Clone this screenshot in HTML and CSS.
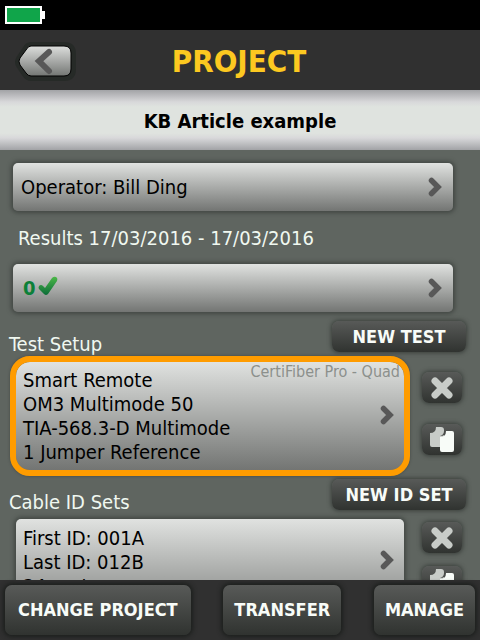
FILE: index.html
```html
<!DOCTYPE html>
<html lang="en">
<head>
    <meta charset="utf-8">
    <title>Project</title>
    <link rel="stylesheet" href="styles.css">
</head>
<body>
    <!-- shared icons -->
    <svg class="sprite" aria-hidden="true">
        <symbol id="chevron" viewBox="0 0 14 20">
            <path d="M3.5 3.5 L10 10 L3.5 16.5" fill="none" stroke="#585858" stroke-width="5.5" stroke-linecap="round"/>
        </symbol>
        <symbol id="cross" viewBox="0 0 22 22">
            <path d="M4 4 L18 18 M18 4 L4 18" stroke="#c8ccc8" stroke-width="7" stroke-linecap="round"/>
        </symbol>
        <symbol id="copy" viewBox="0 0 26 26">
            <path d="M7 0 H12 Q15 0 15 3 V20 H3 Q1 20 1 18 V6 Q7 6 7 0 Z" fill="#c8ccc8"/>
            <path d="M11 9 Q17 9 17 4 L15 4 Q15 8 11 9 Z" fill="#4a4c4a"/>
            <path d="M17 4 H23 Q25 4 25 6 V23 Q25 25 23 25 H13 Q11 25 11 23 V10 Q17 10 17 4 Z" fill="#f8fcf8"/>
        </symbol>
    </svg>

    <div class="status-bar">
        <div class="battery"><span></span></div>
    </div>

    <header class="top-bar">
        <button class="back" type="button" aria-label="Back">
            <svg width="64" height="42" viewBox="0 0 64 42">
                <defs>
                    <linearGradient id="metal" x2="0" y2="1">
                        <stop offset="0" stop-color="#dcdedc"/>
                        <stop offset="1" stop-color="#737673"/>
                    </linearGradient>
                </defs>
                <path d="M17 6 H50 Q58 6 58 14 V29 Q58 37 50 37 H17 Q14 37 12 34 L6 25 Q4 22 6 19 L12 10 Q14 6 17 6 Z" fill="#262a27" stroke="#262a27" stroke-width="8"/>
                <path d="M17 6 H50 Q57 6 57 13 V29 Q57 36 50 36 H17 Q14 36 12 33 L6 25 Q4 21 6 18 L12 10 Q14 6 17 6 Z" fill="url(#metal)" stroke="#000" stroke-width="1"/>
                <path d="M35 12 L25 21 L35 31" fill="none" stroke="#585858" stroke-width="6" stroke-linecap="round"/>
            </svg>
        </button>
        <h1>PROJECT</h1>
    </header>

    <h2 class="project-name">KB Article example</h2>

    <main class="content">
        <button class="card row" type="button">
            <span>Operator: Bill Ding</span>
            <svg class="chevron"><use href="#chevron"/></svg>
        </button>
        <p class="results-label">Results 17/03/2016 - 17/03/2016</p>
        <button class="card row" type="button">
            <span class="passed">0
                <svg width="20" height="20" viewBox="0 0 20 20" role="img" aria-label="passed">
                    <defs>
                        <linearGradient id="tick" x2="0" y2="1">
                            <stop offset="0" stop-color="#4cb848"/>
                            <stop offset="1" stop-color="#0c6c38"/>
                        </linearGradient>
                    </defs>
                    <path d="M1 10 Q3 8 5 10 L7 12 L14 2 Q16 0 18 1 Q20 2 19 5 L10 18 Q8 20 6 18 L1 13 Q0 12 1 10 Z" fill="url(#tick)"/>
                </svg>
            </span>
            <svg class="chevron"><use href="#chevron"/></svg>
        </button>

        <section>
            <div class="section-head">
                <h3>Test Setup</h3>
                <button class="dark" type="button">NEW TEST</button>
            </div>
            <div class="item">
                <button class="card detail selected" type="button">
                    <span class="lines">Smart Remote<br>OM3 Multimode 50<br>TIA-568.3-D Multimode<br>1 Jumper Reference</span>
                    <span class="module">CertiFiber Pro - Quad</span>
                    <svg class="chevron"><use href="#chevron"/></svg>
                </button>
                <div class="tools">
                    <button class="dark tool" type="button" aria-label="Delete test"><svg width="22" height="22"><use href="#cross"/></svg></button>
                    <button class="dark tool" type="button" aria-label="Copy test"><svg width="26" height="26"><use href="#copy"/></svg></button>
                </div>
            </div>
        </section>

        <section>
            <div class="section-head">
                <h3>Cable ID Sets</h3>
                <button class="dark" type="button">NEW ID SET</button>
            </div>
            <div class="item id-set">
                <button class="card detail" type="button">
                    <span class="lines">First ID: 001A<br>Last ID: 012B<br>24 parts</span>
                    <svg class="chevron"><use href="#chevron"/></svg>
                </button>
                <div class="tools">
                    <button class="dark tool" type="button" aria-label="Delete ID set"><svg width="22" height="22"><use href="#cross"/></svg></button>
                    <button class="dark tool" type="button" aria-label="Copy ID set"><svg width="26" height="26"><use href="#copy"/></svg></button>
                </div>
            </div>
        </section>
    </main>

    <footer class="bottom-bar">
        <button class="dark wide" type="button">CHANGE PROJECT</button>
        <button class="dark" type="button">TRANSFER</button>
        <button class="dark" type="button">MANAGE</button>
    </footer>
</body>
</html>
```

FILE: styles.css
```css
* {
    box-sizing: border-box;
}
body {
    margin: 0;
    height: 100vh;
    display: flex;
    flex-direction: column;
    overflow: hidden;
    background: #5f6560;
    font-family: "DejaVu Sans Condensed", Tahoma, "Noto Sans", sans-serif;
    font-size: 20px;
    line-height: 24px;
}
h1, h2, h3, p {
    margin: 0;
    font-size: 20px;
    font-weight: normal;
}
button {
    border: none;
    font: inherit;
    cursor: pointer;
}
svg {
    display: block;
}
.sprite {
    position: absolute;
    width: 0;
    height: 0;
}

/* bars */
.status-bar {
    flex: none;
    height: 30px;
    padding: 6px 5px;
    background: #000;
}
.battery {
    display: flex;
    align-items: center;
    height: 18px;
}
.battery span {
    width: 37px;
    height: 18px;
    border: 2px solid #fff;
    background: #10a54a;
}
.battery::after {
    content: "";
    width: 3px;
    height: 8px;
    background: #fff;
}
.top-bar {
    flex: none;
    height: 60px;
    display: grid;
    grid-template-columns: 64px 1fr 64px;
    align-items: center;
    padding: 2px 16px 0 14px;
    background: #303030;
}
.top-bar h1 {
    color: #fcc820;
    font-size: 31px;
    font-weight: bold;
    line-height: 36px;
    text-align: center;
}
.back {
    padding: 0;
    background: none;
}
.project-name {
    flex: none;
    padding: 19px 0 17px;
    background: linear-gradient(#a2a3a6, #d8d8da 20%, #dfe3df 28%, #dfe3df 72%, #d8d8da 80%, #a2a3a6);
    font-weight: bold;
    text-align: center;
}
.bottom-bar {
    flex: none;
    display: flex;
    justify-content: space-between;
    padding: 5px;
    background: #303030;
}

/* list */
.content {
    flex: 1;
    min-height: 0;
    overflow: hidden;
    padding-top: 13px;
}
.card {
    display: flex;
    align-items: center;
    justify-content: space-between;
    border-radius: 5px;
    background: linear-gradient(#e0e2e0, #737573);
    box-shadow: 0 0 4px 2px #424743;
    color: #000;
    text-align: left;
}
.row {
    width: calc(100% - 40px);
    height: 48px;
    margin-left: 13px;
    padding: 0 11px 0 8px;
}
.chevron {
    flex: none;
    width: 14px;
    height: 20px;
}
.results-label {
    padding: 15px 18px 14px;
    color: #f0f8f0;
}
.passed {
    display: flex;
    align-items: center;
    gap: 2px;
    padding-left: 2px;
    color: #0c8038;
    font-weight: bold;
}
.passed svg {
    margin-bottom: 4px;
}
.section-head {
    display: flex;
    justify-content: space-between;
    align-items: flex-start;
    padding: 9px 14px 0 9px;
}
.section-head h3 {
    padding-top: 11px;
    color: #f0f8f0;
}
.section-head .dark {
    width: 134px;
    height: 31px;
    padding: 0;
}
section + section .section-head {
    padding-top: 3px;
}
.item {
    display: flex;
    gap: 12px;
    padding: 0 18px 0 10px;
}
.detail {
    position: relative;
    flex: 1;
    min-height: 108px;
    padding: 6px 10px 6px 7px;
}
.lines {
    white-space: nowrap;
}
.selected {
    border: 6px solid #ff9c00;
    border-radius: 20px;
    background-clip: padding-box;
    box-shadow: 0 0 3px 0 #424743;
}
.selected .chevron {
    margin-bottom: 3px;
}
.module {
    position: absolute;
    top: 0;
    right: 4px;
    color: #8c908c;
    font-size: 16px;
    line-height: 20px;
}
.tools {
    display: flex;
    flex-direction: column;
    gap: 21px;
    padding-top: 16px;
}
.id-set {
    gap: 18px;
    padding: 5px 18px 0 16px;
}
.id-set .detail {
    align-items: flex-start;
    padding-top: 7px;
}
.id-set .chevron {
    margin-top: 24px;
}
.id-set .tools {
    gap: 13px;
    padding-top: 3px;
}

/* dark buttons */
.dark {
    padding: 0 11px;
    border-radius: 7px;
    background: linear-gradient(#585a58, #303330);
    box-shadow: 0 0 4px 1px #3a3f3b;
    color: #f8fcf8;
    font-size: 18px;
    font-weight: bold;
    white-space: nowrap;
}
.bottom-bar .dark {
    height: 50px;
    box-shadow: 0 0 4px 2px #1c1f1d;
}
.bottom-bar .wide {
    padding: 0 13px;
}
.tool {
    display: flex;
    align-items: center;
    justify-content: center;
    width: 40px;
    height: 31px;
    padding: 0;
}
```
